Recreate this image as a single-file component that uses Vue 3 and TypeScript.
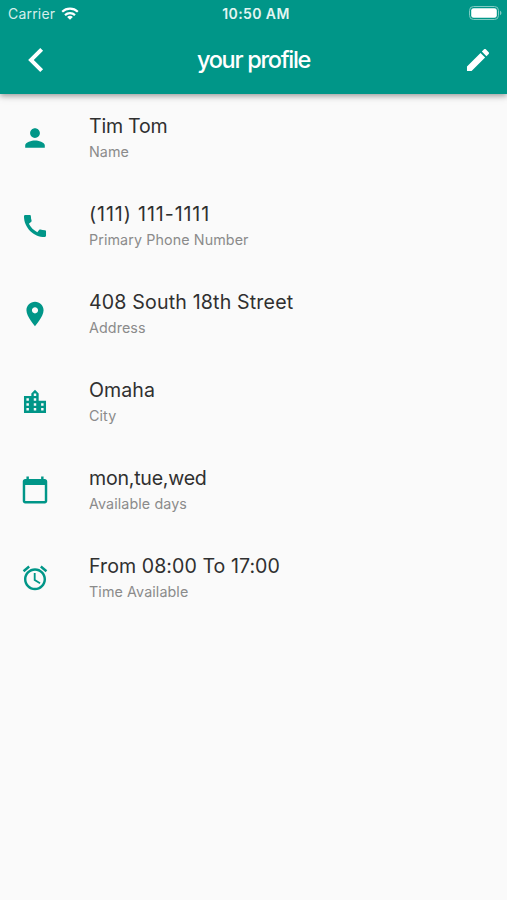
<script setup lang="ts">
interface ProfileField {
  key: string
  value: string
  label: string
  icon: string
}

const fields: ProfileField[] = [
  {
    key: 'name',
    value: 'Tim Tom',
    label: 'Name',
    icon: 'M12 12c2.21 0 4-1.79 4-4s-1.79-4-4-4-4 1.79-4 4 1.79 4 4 4zm0 2c-2.67 0-8 1.34-8 4v2h16v-2c0-2.66-5.33-4-8-4z',
  },
  {
    key: 'phone',
    value: '(111) 111-1111',
    label: 'Primary Phone Number',
    icon: 'M20.01 15.38c-1.23 0-2.42-.2-3.53-.56-.35-.12-.74-.03-1.01.24l-1.57 1.97c-2.83-1.35-5.48-3.9-6.89-6.83l1.95-1.66c.27-.28.35-.67.24-1.02-.37-1.11-.56-2.3-.56-3.53 0-.54-.45-.99-.99-.99H4.19C3.65 3 3 3.24 3 3.99 3 13.28 10.73 21 20.01 21c.71 0 .99-.63.99-1.18v-3.45c0-.54-.45-.99-.99-.99z',
  },
  {
    key: 'address',
    value: '408 South 18th Street',
    label: 'Address',
    icon: 'M12 2C8.13 2 5 5.13 5 9c0 5.25 7 13 7 13s7-7.75 7-13c0-3.87-3.13-7-7-7zm0 9.5c-1.38 0-2.5-1.12-2.5-2.5s1.12-2.5 2.5-2.5 2.5 1.12 2.5 2.5-1.12 2.5-2.5 2.5z',
  },
  {
    key: 'city',
    value: 'Omaha',
    label: 'City',
    icon: 'M15 11V5l-3-3-3 3v2H3v14h18V11h-6zm-8 8H5v-2h2v2zm0-4H5v-2h2v2zm0-4H5V9h2v2zm6 8h-2v-2h2v2zm0-4h-2v-2h2v2zm0-4h-2V9h2v2zm0-4h-2V5h2v2zm6 12h-2v-2h2v2zm0-4h-2v-2h2v2z',
  },
  {
    key: 'days',
    value: 'mon,tue,wed',
    label: 'Available days',
    icon: 'M20 3h-1V1h-2v2H7V1H5v2H4c-1.1 0-2 .9-2 2v16c0 1.1.9 2 2 2h16c1.1 0 2-.9 2-2V5c0-1.1-.9-2-2-2zm0 18H4V8h16v13z',
  },
  {
    key: 'time',
    value: 'From 08:00 To 17:00',
    label: 'Time Available',
    icon: 'M22 5.72l-4.6-3.86-1.29 1.53 4.6 3.86L22 5.72zM7.88 3.39L6.6 1.86 2 5.71l1.29 1.53 4.59-3.85zM12.5 8H11v6l4.75 2.85.75-1.23-4-2.37V8zM12 4c-4.97 0-9 4.03-9 9s4.02 9 9 9c4.97 0 9-4.03 9-9s-4.03-9-9-9zm0 16c-3.87 0-7-3.13-7-7s3.13-7 7-7 7 3.13 7 7-3.13 7-7 7z',
  },
]
</script>

<template>
  <div class="screen">
    <header class="header">
      <div class="status">
        <div class="carrier">
          <span>Carrier</span>
          <svg class="wifi" viewBox="0 0 18 13" aria-hidden="true">
            <path d="M1.2 4.8a11.4 11.4 0 0 1 15.6 0M4 8.1a7.3 7.3 0 0 1 10 0" />
            <path class="dot" d="M9 12.7L6.1 10a4.3 4.3 0 0 1 5.8 0z" />
          </svg>
        </div>
        <span class="clock">10:50 AM</span>
        <svg class="battery" viewBox="0 0 33 14" aria-hidden="true">
          <rect class="shell" x=".5" y=".5" width="29" height="13" rx="4" />
          <rect x="2.2" y="2.2" width="25.6" height="9.6" rx="2.4" />
          <path class="tip" d="M31 4.8c1.9.7 1.9 3.7 0 4.4z" />
        </svg>
      </div>
      <div class="toolbar">
        <button class="action" type="button" aria-label="Back">
          <svg class="icon" viewBox="-.25 -.25 24.5 24.5">
            <path d="M18.6 4.4L16.3 2.1 6.4 12l9.9 9.9 2.3-2.3L11 12z" />
          </svg>
        </button>
        <h1 class="title">your profile</h1>
        <button class="action" type="button" aria-label="Edit">
          <svg class="icon" viewBox="-.25 -.25 24.5 24.5">
            <path d="M3 17.25V21h3.75L17.81 9.94l-3.75-3.75L3 17.25zM20.71 7.04c.39-.39.39-1.02 0-1.41l-2.34-2.34c-.39-.39-1.02-.39-1.41 0l-1.83 1.83 3.75 3.75 1.83-1.83z" />
          </svg>
        </button>
      </div>
    </header>

    <main class="list">
      <div v-for="field in fields" :key="field.key" class="row" :class="field.key">
        <svg class="icon" viewBox="-.25 -.25 24.5 24.5" aria-hidden="true">
          <path :d="field.icon" />
        </svg>
        <div class="text">
          <div class="value">{{ field.value }}</div>
          <div class="label">{{ field.label }}</div>
        </div>
      </div>
    </main>
  </div>
</template>

<style>
body {
  margin: 0;
  background: #fafafa;
}
</style>

<style scoped>
.screen {
  min-height: 900px;
  background: #fafafa;
  font-family: Inter, Roboto, sans-serif;
  color: #303030;
}

.header {
  box-sizing: border-box;
  height: 94px;
  background: #009688;
  color: #fff;
  box-shadow: 0 2px 5px rgba(0, 0, 0, 0.3), 0 4px 8px rgba(0, 0, 0, 0.08);
}

.status {
  display: grid;
  grid-template-columns: 1fr auto 1fr;
  align-items: center;
  height: 27px;
  padding: 0 5px 0 8px;
}

.carrier {
  display: flex;
  align-items: center;
  gap: 6px;
  font-size: 14px;
  letter-spacing: 0.2px;
  color: #d5eeeb;
}

.wifi {
  width: 18px;
  height: 13px;
  margin-top: -1px;
  fill: none;
  stroke: #fff;
  stroke-width: 2.2;
}

.wifi .dot {
  fill: #fff;
  stroke: none;
}

.clock {
  padding-left: 2px;
  font-size: 14px;
  font-weight: 600;
  letter-spacing: 0.4px;
  color: #e3f5f2;
}

.battery {
  justify-self: end;
  width: 33px;
  height: 14px;
  margin-top: -1px;
  fill: #fff;
}

.battery .shell {
  fill: none;
  stroke: #80cbc3;
}

.battery .tip {
  fill: #80cbc3;
}

.toolbar {
  display: flex;
  align-items: center;
  justify-content: space-between;
  height: 66px;
  padding: 0 14px 0 20px;
}

.action {
  display: flex;
  padding: 0;
  border: 0;
  background: none;
  color: inherit;
}

.icon {
  flex: none;
  display: block;
  width: 30px;
  height: 30px;
  fill: currentColor;
}

.title {
  margin: 0;
  padding-right: 6px;
  font-size: 23.5px;
  font-weight: 500;
  line-height: 30px;
  letter-spacing: -1.3px;
}

.row {
  display: flex;
  align-items: center;
  gap: 39px;
  height: 88px;
  padding-left: 20px;
}

.row .icon {
  color: #009688;
}

.text {
  padding-top: 2px;
}

.value {
  font-size: 19.6px;
  line-height: 26px;
  letter-spacing: 0.05px;
}

.name .value,
.days .value {
  letter-spacing: -0.25px;
}

.phone .value {
  letter-spacing: 0.9px;
}

.address .value {
  letter-spacing: 0.16px;
}

.label {
  font-size: 14.3px;
  line-height: 26px;
  letter-spacing: 0.1px;
  color: #8b8b8b;
}
</style>
